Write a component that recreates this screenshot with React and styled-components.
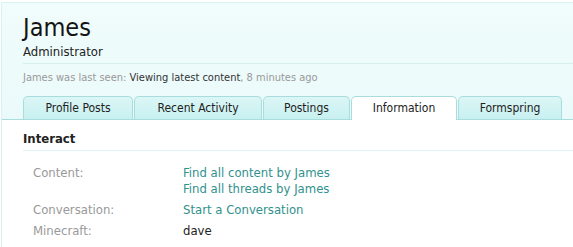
import React from 'react';
import styled, { createGlobalStyle } from 'styled-components';

const GlobalStyle = createGlobalStyle`
    html, body {
        margin: 0;
        padding: 0;
        background: #ffffff;
    }
    body {
        font-family: Tahoma, "DejaVu Sans Condensed", "DejaVu Sans", sans-serif;
        color: #222;
    }
`;

const Page = styled.div`
    width: 573px;
    height: 247px;
    overflow: hidden;
    padding-top: 2px;
    box-sizing: border-box;
    background: #fff;
`;

const Frame = styled.div`
    border-top: 1px solid #dcf1f1;
    border-left: 1px solid #dcf1f1;
    margin-left: 1px;
    height: 100%;
`;

const Header = styled.div`
    background: linear-gradient(to bottom, #f1fcfc 0%, #eafafa 100%);
    padding: 11px 0 0 21px;
`;

const Name = styled.h1`
    margin: 0;
    font-size: 25px;
    line-height: 28px;
    font-weight: normal;
    color: #141414;
`;

const UserTitle = styled.div`
    font-size: 13px;
    line-height: 16px;
    margin-top: 2px;
    color: #222;
    padding-bottom: 3px;
    border-bottom: 1px solid #d6f0f0;
`;

const LastSeen = styled.div`
    font-size: 11px;
    line-height: 14px;
    color: #999;
    padding-top: 7px;
    b {
        font-weight: normal;
        color: #333;
    }
`;

const TabBar = styled.ul`
    list-style: none;
    margin: 0 0 0 -21px;
    padding: 11px 0 0 21px;
    display: flex;
    align-items: flex-end;
    gap: 1px;
    border-bottom: 1px solid #a9dddd;
`;

const Tab = styled.li`
    width: ${p => p.$w}px;
    box-sizing: border-box;
    border: 1px solid #a9dddd;
    border-bottom: none;
    border-radius: 5px 5px 0 0;
    background: ${p => p.$active
        ? '#ffffff'
        : 'linear-gradient(to bottom, #dcf6f6 0%, #c8f0f0 100%)'};
    margin-bottom: ${p => (p.$active ? '-1px' : '0')};
    height: ${p => (p.$active ? '24px' : '23px')};
    font-size: 12px;
    line-height: 22px;
    text-align: center;
    color: #222;
`;

const Body = styled.div`
    padding: 11px 0 0 21px;
`;

const SectionTitle = styled.h3`
    margin: 0;
    font-size: 13px;
    font-weight: bold;
    line-height: 16px;
    color: #222;
    padding-bottom: 3px;
    border-bottom: 1px solid #dff3f3;
`;

const Pairs = styled.dl`
    margin: 14px 0 0 10px;
    display: grid;
    grid-template-columns: 150px 1fr;
    row-gap: 5px;
    font-size: 13px;
    line-height: 16px;
    dt {
        color: #999;
    }
    dd {
        margin: 0;
        color: #222;
    }
`;

const Link = styled.a`
    display: block;
    color: #31918d;
    text-decoration: none;
`;

const tabs = [
    { label: 'Profile Posts', w: 110 },
    { label: 'Recent Activity', w: 128 },
    { label: 'Postings', w: 87 },
    { label: 'Information', w: 106, active: true },
    { label: 'Formspring', w: 104 },
];

export default function App() {
    return (
        <Page>
            <GlobalStyle />
            <Frame>
                <Header>
                    <Name>James</Name>
                    <UserTitle>Administrator</UserTitle>
                    <LastSeen>
                        James was last seen: <b>Viewing latest content</b>, 8 minutes ago
                    </LastSeen>
                    <TabBar>
                        {tabs.map(t => (
                            <Tab key={t.label} $w={t.w} $active={t.active}>{t.label}</Tab>
                        ))}
                    </TabBar>
                </Header>
                <Body>
                    <SectionTitle>Interact</SectionTitle>
                    <Pairs>
                        <dt>Content:</dt>
                        <dd>
                            <Link href="#">Find all content by James</Link>
                            <Link href="#">Find all threads by James</Link>
                        </dd>
                        <dt>Conversation:</dt>
                        <dd><Link href="#">Start a Conversation</Link></dd>
                        <dt>Minecraft:</dt>
                        <dd>dave</dd>
                    </Pairs>
                </Body>
            </Frame>
        </Page>
    );
}
